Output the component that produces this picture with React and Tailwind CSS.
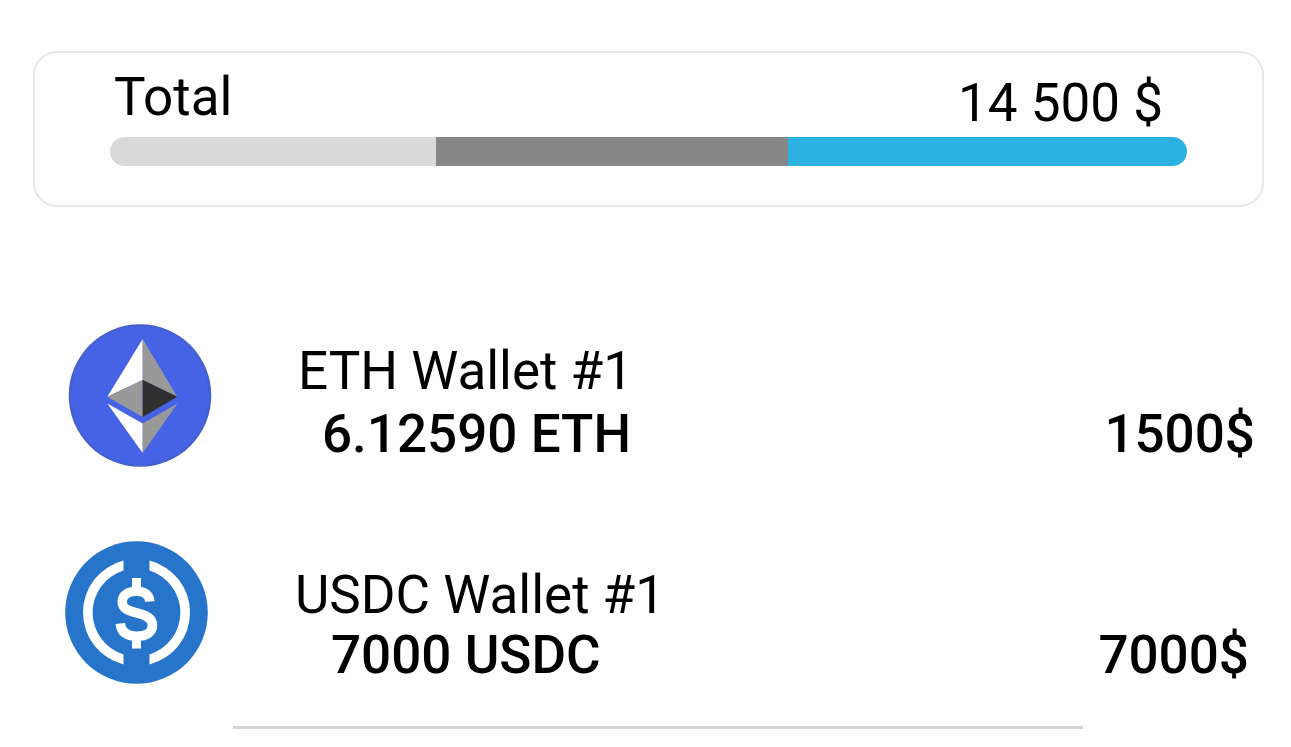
const segments = [
  { id: 'other', share: 326, color: 'bg-[#d9d9d9]' },
  { id: 'eth', share: 352, color: 'bg-[#878787]' },
  { id: 'usdc', share: 399, color: 'bg-[#2bb1e2]' },
];

const wallets = [
  {
    id: 'eth',
    name: 'ETH Wallet #1',
    amount: '6.12590 ETH',
    value: '1500$',
    Icon: EthIcon,
    rowClass: 'pl-[68px] pr-9',
    textClass: 'gap-[3px] pb-1',
    amountClass: 'pl-6',
  },
  {
    id: 'usdc',
    name: 'USDC Wallet #1',
    amount: '7000 USDC',
    value: '7000$',
    Icon: UsdcIcon,
    rowClass: 'pl-[65px] pr-[42px]',
    textClass: '',
    amountClass: 'pl-9',
  },
];

function EthIcon() {
  return (
    <svg className="size-36 shrink-0" viewBox="0 0 144 144" aria-hidden="true">
      <circle cx="72" cy="71.5" r="71.3" fill="#4560cf" />
      <circle cx="72" cy="71.5" r="69" fill="#4563e4" />
      <path d="M74.7 15 L39.3 72.7 L74.7 56 Z" fill="#ffffff" />
      <path d="M74.7 15 L109.3 72.7 L74.7 56 Z" fill="#999999" />
      <path d="M39.3 72.7 L74.7 56 V93 Z" fill="#999999" />
      <path d="M109.3 72.7 L74.7 56 V93 Z" fill="#303030" />
      <path d="M39.3 79.5 L74.7 99.5 V129 Z" fill="#ffffff" />
      <path d="M109.5 79.5 L74.7 99.5 V129 Z" fill="#999999" />
    </svg>
  );
}

function UsdcIcon() {
  return (
    <svg className="size-36 shrink-0" viewBox="0 0 144 144" aria-hidden="true">
      <circle cx="71.5" cy="71.5" r="71.3" fill="#2775ca" />
      <path
        d="M58.5 19.6 A53.5 53.5 0 0 0 58.5 123.4 V113.5 A44 44 0 0 1 58.5 29.5 Z"
        fill="#ffffff"
      />
      <path
        d="M84.5 19.6 A53.5 53.5 0 0 1 84.5 123.4 V113.5 A44 44 0 0 0 84.5 29.5 Z"
        fill="#ffffff"
      />
      <path
        d="M84.8 60.5 C84.3 53.5 79.5 50.2 71.8 50.2 C63 50.2 57.2 54.2 57.2 60.7 C57.2 67.5 63 69.8 71.5 71.8 C81 74 87.5 77 87.5 84.3 C87.5 91.5 81 95.3 71.8 95.3 C62 95.3 56 91.2 55.3 82.5"
        fill="none"
        stroke="#ffffff"
        strokeWidth="9.5"
      />
      <path d="M71.5 37 V50 M71.5 95 V107.5" stroke="#ffffff" strokeWidth="9" />
    </svg>
  );
}

function TotalCard() {
  return (
    <section className="ml-[33px] mr-[27px] rounded-3xl border-2 border-[#e8e8e8] px-[75px] pt-3.5 pb-[39px]">
      <div className="flex items-start justify-between pl-1 pr-6">
        <h1>Total</h1>
        <span className="pt-1.5">14 500 $</span>
      </div>
      <div className="mt-1 flex h-[29px] overflow-hidden rounded-full">
        {segments.map((segment) => (
          <div key={segment.id} className={segment.color} style={{ flexGrow: segment.share }}></div>
        ))}
      </div>
    </section>
  );
}

function WalletRow({ wallet }) {
  const { Icon } = wallet;

  return (
    <li className={`flex items-end ${wallet.rowClass}`}>
      <Icon />
      <div className={`ml-[86px] flex flex-1 flex-col ${wallet.textClass}`}>
        <h2>{wallet.name}</h2>
        <div className="flex justify-between font-medium">
          <span className={wallet.amountClass}>{wallet.amount}</span>
          <span>{wallet.value}</span>
        </div>
      </div>
    </li>
  );
}

export default function App() {
  return (
    <main className="min-h-screen bg-[#fefefe] pt-[51px] pb-4 font-[Roboto,sans-serif] text-[53px] leading-[60px] text-black">
      <TotalCard />
      <ul className="mt-[117px] flex flex-col gap-[73px]">
        {wallets.map((wallet) => (
          <WalletRow key={wallet.id} wallet={wallet} />
        ))}
      </ul>
      <hr className="mt-[41px] ml-[233px] mr-[208px] border-t-[3px] border-[#d4d4d4]" />
    </main>
  );
}
